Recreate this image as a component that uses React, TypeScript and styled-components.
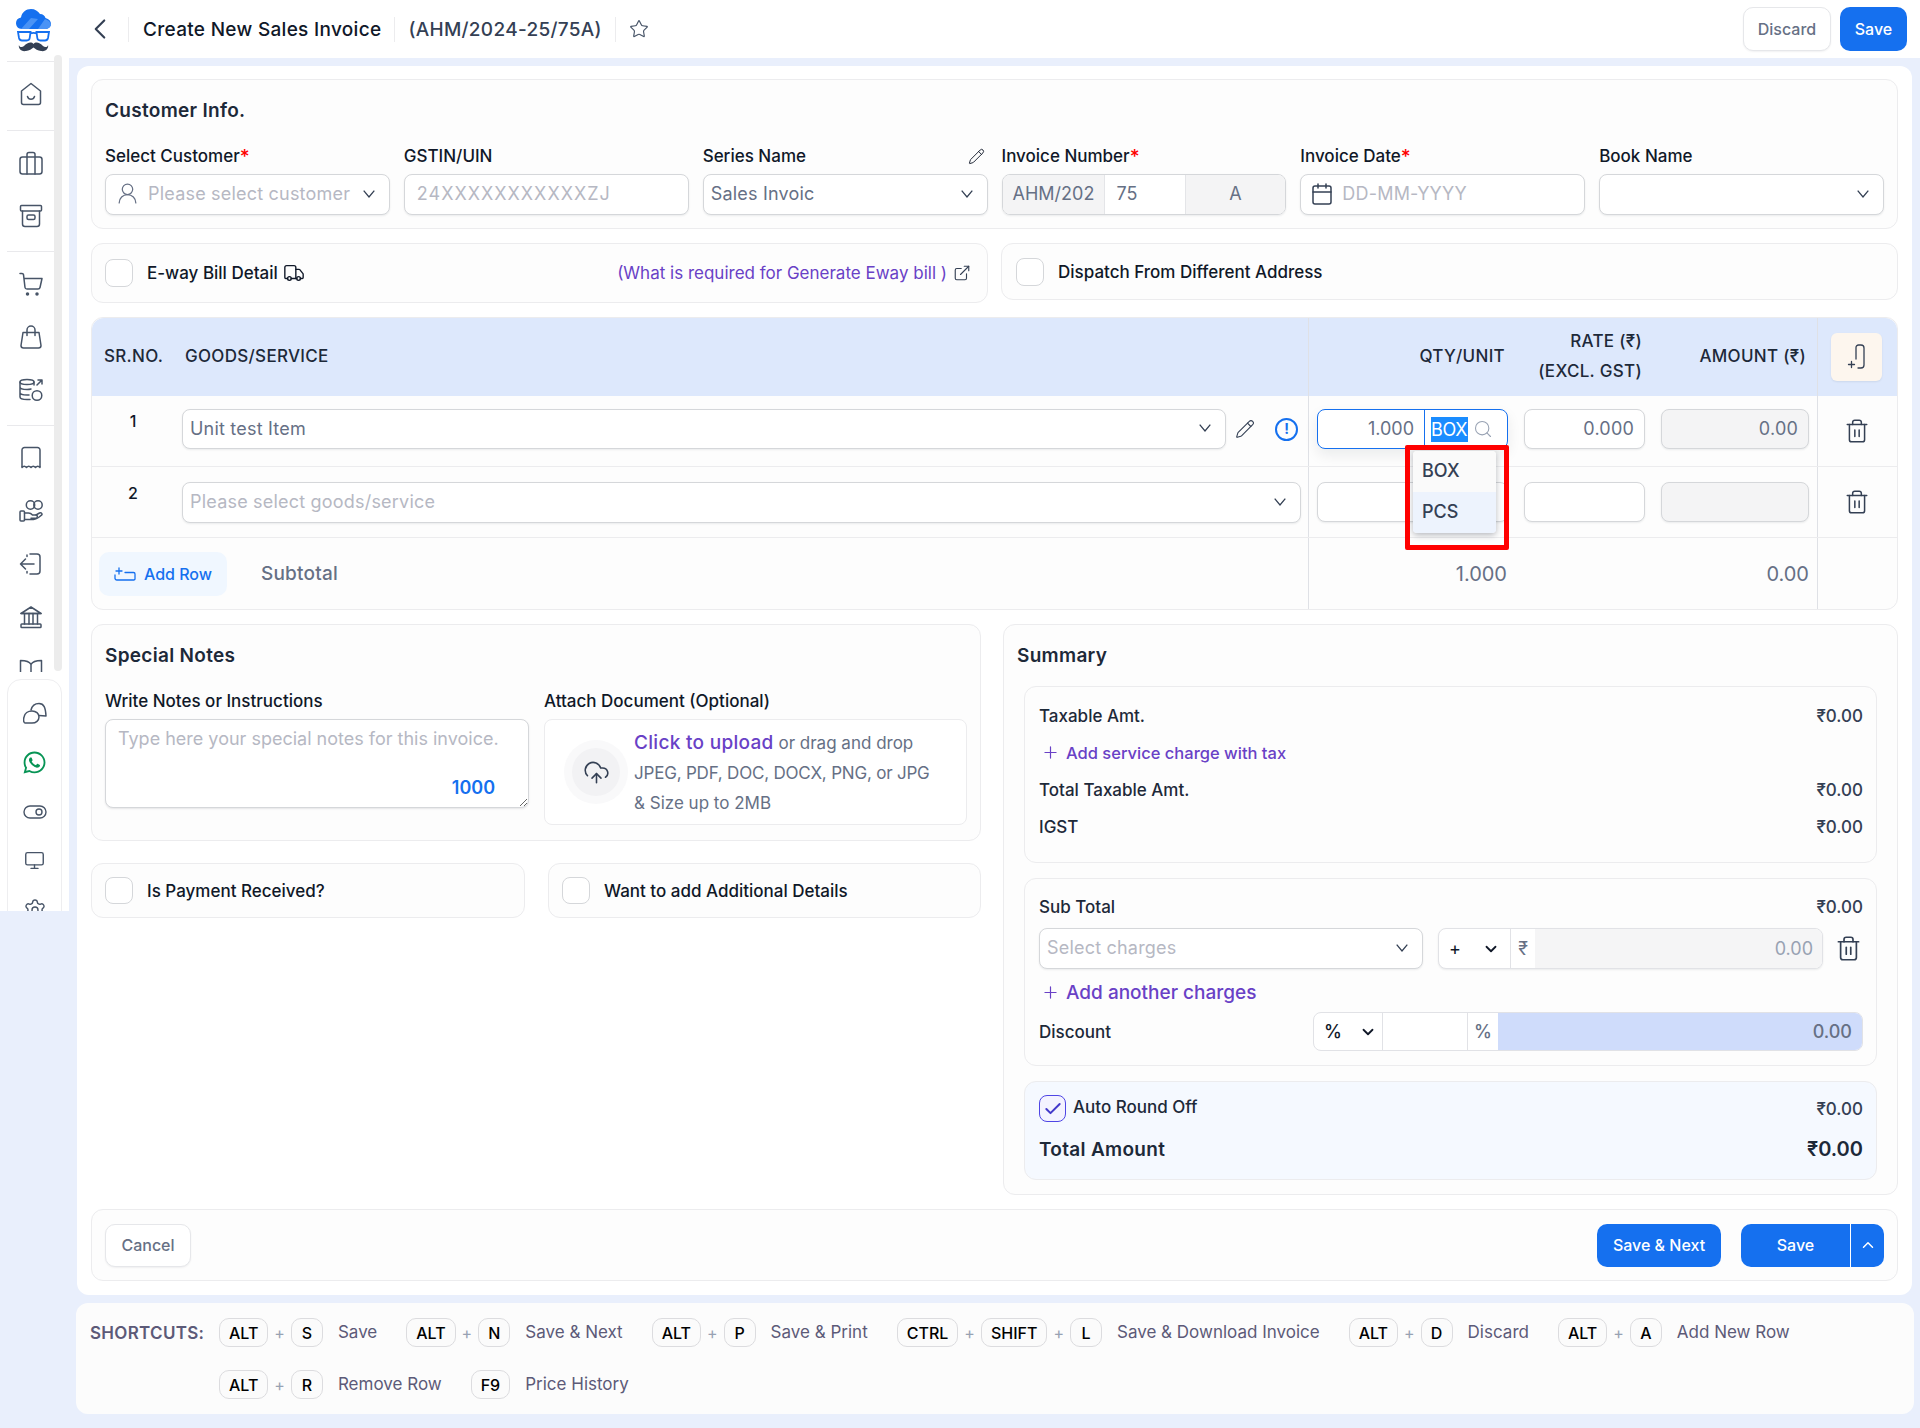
import React from 'react';
import styled, { createGlobalStyle } from 'styled-components';
import { FaWhatsapp } from 'react-icons/fa';
import {
  Calendar,
  Check,
  ChevronDown,
  ChevronLeft,
  ChevronUp,
  CloudUpload,
  ExternalLink,
  Monitor,
  Pencil,
  Plus,
  Search,
  Settings,
  Star,
  Trash2,
  Truck,
  UserRound,
} from 'lucide-react';

const GlobalStyle = createGlobalStyle`
  * { box-sizing: border-box; }
  body {
    margin: 0;
    background: #e9effc;
    font-family: Inter, "Noto Sans", sans-serif;
    color: #101828;
  }
`;

const Shell = styled.div`
  display: grid;
  grid-template-columns: 69px 1fr;
  min-height: 1428px;
`;

/* sidebar */
const Sidebar = styled.aside`
  height: 911px;
  background: #fff;
  overflow: hidden;
`;
const SideTop = styled.div`
  display: flex;
  height: 672px;
  padding-left: 7px;
  overflow: hidden;
`;
const SideNav = styled.nav`
  width: 47px;
  flex: none;
`;
const ScrollThumb = styled.div`
  width: 8px;
  height: 616px;
  margin-top: 55px;
  background: #ececec;
  border-radius: 4px;
`;
const LogoBox = styled.div`
  height: 62px;
  padding: 9px 0 0 9px;
  border-bottom: 1px solid #e9e9ec;
`;
const NavGroup = styled.div`
  padding: 5px 0 9px;
  border-bottom: 1px solid #e9e9ec;
  &:last-child { border-bottom: none; }
`;
const NavItem = styled.div<{ $green?: boolean; $h?: number }>`
  height: ${(p) => p.$h ?? 53}px;
  display: flex;
  align-items: center;
  justify-content: center;
  color: ${(p) => (p.$green ? '#079455' : '#475467')};
`;
const SideBottom = styled.div`
  margin: 7px 7px 0;
  padding-top: 9px;
  height: 240px;
  border: 1px solid #eeeef0;
  border-radius: 14px 14px 0 0;
`;

const Logo = () => (
  <svg width="35" height="43" viewBox="0 0 35 43">
    <path d="M6 20C2 20 0 17 0 14c0-3 2-5 5-5.500C6 3 10 0 15 0c4 0 7 2 9 5 3 0 5 2 5.500 4C33 10 35 12 35 15c0 3-3 5-6 5Z" fill="#1570ef" />
    <path d="M5 20 15 9l7 1-9 10ZM22 20l7-10 4 2 2 3c0 3-3 5-6 5Z" fill="#4a93f5" />
    <path d="M2 23h12.500l-.8 6c-.2 1.500-1.400 2.500-3 2.500H6c-1.500 0-2.600-1-3-2.500ZM20.500 23H33l-1 6c-.4 1.500-1.500 2.500-3 2.500h-4.700c-1.600 0-2.800-1-3-2.500ZM14.500 24.500c2-.8 4-.8 6 0" fill="none" stroke="#1570ef" strokeWidth="1.800" />
    <path d="M17.500 35c-2.500-3-6.500-1-9.500 2-2 2-5 1-5-1-1 3 2 7 7 6 3-.5 6-2 7.500-3.500C19 40 22 41.500 25 42c5 1 8-3 7-6 0 2-3 3-5 1-3-3-7-5-9.500-2Z" fill="#344054" />
  </svg>
);

const IconSvg = ({ children }: { children: React.ReactNode }) => (
  <svg width="24" height="24" viewBox="0 0 24 24" fill="none" stroke="currentColor" strokeWidth="1.500" strokeLinecap="round" strokeLinejoin="round">
    {children}
  </svg>
);

const HomeIcon = () => (
  <IconSvg>
    <path d="M12 1.500 2.500 9v11.500a2 2 0 0 0 2 2h15a2 2 0 0 0 2-2V9Z" />
    <path d="M8.500 14.500c.6 1.800 2 2.700 3.500 2.700s2.900-.9 3.500-2.700" />
  </IconSvg>
);
const CaseIcon = () => (
  <IconSvg>
    <rect x="1" y="6" width="22" height="17" rx="2.500" />
    <path d="M8 23V3.500A2 2 0 0 1 10 1.500h4a2 2 0 0 1 2 2V23" />
  </IconSvg>
);
const ArchiveIcon = () => (
  <IconSvg>
    <rect x="1.500" y="1.500" width="21" height="5.500" rx="1" />
    <path d="M3.500 7v13a2.500 2.500 0 0 0 2.500 2.500h12a2.500 2.500 0 0 0 2.500-2.500V7" />
    <rect x="8" y="11" width="8" height="4.500" rx="1.500" />
  </IconSvg>
);
const CartIcon = () => (
  <IconSvg>
    <path d="M1 1.500h2c.8 0 1.400.5 1.500 1.200L6 15.500c.1 1 1 1.500 2 1.500h11c1 0 1.800-.6 2-1.500l2-9H5" />
    <circle cx="8.500" cy="22" r="1" fill="currentColor" />
    <circle cx="18" cy="22" r="1" fill="currentColor" />
  </IconSvg>
);
const BagIcon = () => (
  <IconSvg>
    <path d="M4 7.500h16l2 13a2.500 2.500 0 0 1-2.500 2.500h-15A2.500 2.500 0 0 1 2 20.500Z" />
    <path d="M8 10.500V5a4 4 0 0 1 8 0v5.500" />
  </IconSvg>
);
const DataIcon = () => (
  <IconSvg>
    <ellipse cx="8" cy="4" rx="7" ry="2.500" />
    <path d="M1 4v15c0 1.500 3 2.500 7 2.500h3M1 9c0 1.400 3 2.500 7 2.500 1.500 0 3-.2 4-.5M1 14.500C1 16 4 17 8 17h2M15 4v3" />
    <circle cx="18" cy="17.500" r="4.800" />
    <path d="M18 7l5-5M19 2h4v4" />
  </IconSvg>
);
const ReceiptIcon = () => (
  <IconSvg>
    <path d="M3 21.500V4a2.500 2.500 0 0 1 2.500-2.500h13A2.500 2.500 0 0 1 21 4v17.500c-1.500-1.800-3-1.800-4.500 0-1.500-1.800-3-1.800-4.500 0-1.500-1.800-3-1.800-4.500 0-1.500-1.800-3-1.800-4.500 0Z" />
  </IconSvg>
);
const HandIcon = () => (
  <IconSvg>
    <rect x="1" y="12" width="4.500" height="10" rx="1" />
    <path d="M5.500 14h4c2 0 3 .8 4 2h3.500c1.800 0 1.800 3.200 0 3.200h-5" />
    <path d="M5.500 20.500h9c2 0 3-.5 5-2l3-2.300c1.200-1.200 0-3-2-2.200l-3.500 2" />
    <circle cx="11.500" cy="6" r="4.200" />
    <circle cx="19" cy="6" r="4.200" />
  </IconSvg>
);
const DoorIcon = () => (
  <IconSvg>
    <path d="M11 2h7a3 3 0 0 1 3 3v14a3 3 0 0 1-3 3h-7M8 4.500V3M8 21v-1.500" />
    <path d="M15 12H1.500M6.500 7l-5 5 5 5" />
  </IconSvg>
);
const BankIcon = () => (
  <IconSvg>
    <path d="M2 8.500 12 2l10 6.500Z" />
    <path d="M2 8.500h20" />
    <rect x="2" y="19" width="20" height="3.500" rx=".8" />
    <path d="M5.500 8.500V19M10 8.500V19M14 8.500V19M18.500 8.500V19" />
  </IconSvg>
);
const BookIcon = () => (
  <IconSvg>
    <path d="M12 6.500C10.500 3.500 7 2.500 1.500 2.500V20M12 6.500c1.500-3 5-4 10.500-4V20M12 6.500V24" />
  </IconSvg>
);
const ChatIcon = () => (
  <IconSvg>
    <path d="M8 8c1-4 4-6.500 8-6.500 5 0 6.500 4 7 12.500l-7-.5" />
    <path d="M9 9c4 0 7 2.500 7 6s-3 6-7 6H2c-.5 0-.8-.5-1-1-.5-1-.5-3 0-5 .7-3.500 4-6 8-6Z" />
  </IconSvg>
);
const ToggleIcon = () => (
  <svg width="24" height="14" viewBox="0 0 24 14" fill="none" stroke="currentColor" strokeWidth="1.400">
    <rect x="1" y="1" width="22" height="12" rx="6" />
    <circle cx="16" cy="7" r="3" />
  </svg>
);
const DoorPlusIcon = () => (
  <svg width="20" height="26" viewBox="0 0 20 26" fill="none" stroke="#344054" strokeWidth="1.300" strokeLinecap="round">
    <path d="M9 15V3.500A2.500 2.500 0 0 1 11.500 1H14a3 3 0 0 1 3 3v17a3 3 0 0 1-3 3h-3" />
    <path d="M4.500 17.500v6M1.500 20.500h6" />
  </svg>
);
const AddRowIcon = () => (
  <svg width="22" height="14" viewBox="0 0 22 14" fill="none" stroke="#1570ef" strokeWidth="1.300" strokeLinecap="round">
    <path d="M5 1v6M2 4h6M1 8v2.500A2 2 0 0 0 3 13h17a1.500 1.500 0 0 0 1-1V7a1.500 1.500 0 0 0-1.500-1.500H11" />
  </svg>
);
const ChevronBox = styled.span`
  display: flex;
  flex: none;
  margin-right: 4px;
`;
const ThinChevron = () => (
  <ChevronBox>
    <svg width="12" height="8" viewBox="0 0 12 8" fill="none" stroke="#344054" strokeWidth="1.300">
      <path d="M.7.7 6 7 11.300.7" />
    </svg>
  </ChevronBox>
);

/* main column */
const MainCol = styled.main`
  min-width: 0;
  display: flex;
  flex-direction: column;
`;
const Header = styled.header`
  height: 58px;
  background: #fff;
  display: flex;
  align-items: center;
  padding: 0 13px 0 24px;
`;
const BackBtn = styled.div`
  width: 36px;
  height: 25px;
  display: flex;
  align-items: center;
  color: #344054;
  border-right: 1px solid #ececee;
  margin-right: 14px;
  svg { margin-left: -10px; flex: none; }
`;
const HeaderTitle = styled.div<{ $tail?: boolean }>`
  font-size: 19px;
  font-weight: 500;
  letter-spacing: 0.3px;
  color: ${(p) => (p.$tail ? '#344054' : '#101828')};
  height: 25px;
  line-height: 25px;
  padding-right: 13px;
  margin-right: 13px;
  border-right: 1px solid #ececee;
`;
const StarBtn = styled.div`
  color: #475467;
  display: flex;
`;
const HeaderActions = styled.div`
  margin-left: auto;
  display: flex;
  gap: 9px;
`;
const BaseBtn = styled.button<{ $w: number; $h?: number }>`
  width: ${(p) => p.$w}px;
  height: ${(p) => p.$h ?? 44}px;
  border-radius: 10px;
  font-family: inherit;
  font-size: 16px;
  font-weight: 500;
  border: none;
`;
const GhostBtn = styled(BaseBtn)`
  background: #fff;
  color: #667085;
  border: 1px solid #e6e7ea;
  box-shadow: 0 1px 2px rgba(16, 24, 40, 0.06);
`;
const PrimaryBtn = styled(BaseBtn)`
  background: #1570ef;
  color: #fff;
`;

const Content = styled.div`
  padding: 8px 8px 0;
`;
const MainCard = styled.div`
  background: #fff;
  border-radius: 12px;
  padding: 13px 14px 14px;
  display: flex;
  flex-direction: column;
  gap: 14px;
`;
const Card = styled.section`
  background: #fdfdfd;
  border: 1px solid #ececee;
  border-radius: 12px;
`;
const SectionTitle = styled.h2`
  margin: 0;
  font-size: 19px;
  letter-spacing: 0.3px;
  line-height: 24px;
  font-weight: 600;
  color: #1d2939;
`;
const CustomerCard = styled(Card)`
  padding: 19px 13px 13px;
`;
const FieldGrid = styled.div`
  display: grid;
  grid-template-columns: repeat(6, 1fr);
  gap: 14px;
  margin-top: 21px;
`;
const Label = styled.label`
  display: flex;
  justify-content: space-between;
  align-items: center;
  height: 24px;
  margin-bottom: 6px;
  font-size: 17px;
  font-weight: 450;
  color: #101828;
  white-space: nowrap;
  b { color: #f00; font-weight: 500; margin-right: auto; font-size: 19px; }
  svg { margin-right: 3px; }
`;
const Input = styled.div<{ $h?: number; $grey?: boolean; $pl?: number; $grow?: boolean }>`
  height: ${(p) => p.$h ?? 41}px;
  display: flex;
  align-items: center;
  gap: 8px;
  padding: 0 10px 2px ${(p) => p.$pl ?? 12}px;
  flex: ${(p) => (p.$grow ? 1 : 'none')};
  background: ${(p) => (p.$grey ? '#f4f4f5' : '#fff')};
  border: 1px solid #d5d7da;
  border-radius: 8px;
  box-shadow: 0 1px 2px rgba(16, 24, 40, 0.08);
  font-size: 18px;
  letter-spacing: 0.2px;
  color: #667085;
  overflow: hidden;
  white-space: nowrap;
`;
const Placeholder = styled.span<{ $ls?: number }>`
  color: #b6b8c3;
  flex: 1;
  letter-spacing: ${(p) => p.$ls ?? 0.2}px;
`;
const Value = styled.span`
  color: #667085;
  flex: 1;
`;
const NumValue = styled.span`
  flex: 1;
  text-align: right;
  color: #667085;
`;
const SegGroup = styled.div`
  height: 41px;
  display: grid;
  grid-template-columns: 102px 81px 1fr;
  border: 1px solid #d5d7da;
  border-radius: 8px;
  box-shadow: 0 1px 2px rgba(16, 24, 40, 0.08);
  overflow: hidden;
  font-size: 18px;
  color: #667085;
`;
const Seg = styled.div<{ $grey?: boolean; $center?: boolean }>`
  display: flex;
  align-items: center;
  justify-content: ${(p) => (p.$center ? 'center' : 'flex-start')};
  padding: 0 ${(p) => (p.$grey && !p.$center ? '0 2px 10px' : '12px 2px')};
  background: ${(p) => (p.$grey ? '#f4f4f5' : '#fff')};
  border-right: 1px solid #e4e5e8;
  white-space: nowrap;
  &:last-child { border-right: none; }
`;

const TwoCol = styled.div`
  display: grid;
  grid-template-columns: 1fr 1fr;
  gap: 13px;
  align-items: start;
`;
const CheckCard = styled(Card)<{ $h: number; $pl?: number }>`
  height: ${(p) => p.$h}px;
  display: flex;
  align-items: center;
  padding: 0 13px 0 ${(p) => p.$pl ?? 13}px;
  gap: 14px;
  font-size: 17px;
  font-weight: 450;
  color: #101828;
`;
const Box = styled.span<{ $on?: boolean; $w?: number; $h?: number }>`
  width: ${(p) => p.$w ?? 28}px;
  height: ${(p) => p.$h ?? 28}px;
  flex: none;
  display: flex;
  align-items: center;
  justify-content: center;
  background: ${(p) => (p.$on ? '#f4f3ff' : '#fff')};
  border: 1px solid ${(p) => (p.$on ? '#4f46e5' : '#d5d7da')};
  border-radius: 8px;
  color: #4338ca;
`;
const InlineIcon = styled.span`
  display: inline-flex;
  margin-left: -9px;
`;
const HelpLink = styled.a`
  margin: 0 3px 0 auto;
  display: flex;
  align-items: center;
  gap: 6px;
  font-size: 17px;
  font-weight: 400;
  color: #6941c6;
  svg { color: #344054; }
`;

/* goods table */
const TableCard = styled(Card)`
  position: relative;
`;
const TableRow = styled.div<{ $head?: boolean; $h: number }>`
  display: grid;
  grid-template-columns: 1216px 509px 1fr;
  height: ${(p) => p.$h}px;
  background: ${(p) => (p.$head ? '#dde8fc' : 'transparent')};
  border-radius: ${(p) => (p.$head ? '12px 12px 0 0' : '0')};
  border-bottom: ${(p) => (p.$head ? 'none' : '1px solid #ececee')};
  &:last-child { border-bottom: none; }
`;
const GoodsCell = styled.div`
  display: grid;
  grid-template-columns: 90px 1fr;
`;
const SrCell = styled.div<{ $top?: number }>`
  padding: ${(p) => p.$top ?? 13}px 8px 0 0;
  text-align: center;
  font-size: 16px;
  line-height: 24px;
  font-weight: 500;
`;
const HeadText = styled.div<{ $pad?: number }>`
  display: flex;
  align-items: center;
  padding: 0 0 2px ${(p) => p.$pad ?? 0}px;
  font-size: 17px;
  letter-spacing: 0.3px;
  font-weight: 500;
  color: #1d2939;
  white-space: nowrap;
`;
const GoodsInputWrap = styled.div<{ $top?: number }>`
  padding: ${(p) => p.$top ?? 13}px 7px 0 0;
  display: flex;
  align-items: flex-start;
  gap: 0;
`;
const GoodsTools = styled.div`
  flex: none;
  width: 75px;
  height: 40px;
  display: flex;
  align-items: center;
  gap: 20px;
  padding-left: 9px;
  color: #344054;
`;
const InfoMark = styled.span`
  width: 23px;
  height: 23px;
  flex: none;
  display: flex;
  align-items: center;
  justify-content: center;
  border: 2px solid #1570ef;
  border-radius: 50%;
  color: #1570ef;
  font-size: 14px;
  font-weight: 700;
  line-height: 1;
`;
const NumbersCell = styled.div<{ $top?: number }>`
  display: grid;
  grid-template-columns: 191px 121px 148px;
  column-gap: 16px;
  padding: ${(p) => p.$top ?? 13}px 8px 0;
  border-left: 1px solid #dfe1e6;
  align-items: start;
  position: relative;
`;
const HeadNumbers = styled(NumbersCell)`
  padding-top: 0;
  padding-bottom: 2px;
  height: 100%;
  align-items: center;
`;
const HeadNum = styled.div`
  text-align: right;
  padding-right: 3px;
  font-size: 17px;
  letter-spacing: 0.3px;
  line-height: 30px;
  font-weight: 500;
  color: #1d2939;
  white-space: nowrap;
`;
const ActionCell = styled.div`
  border-left: 1px solid #dfe1e6;
  display: flex;
  align-items: center;
  justify-content: center;
  padding-right: 2px;
  color: #344054;
`;
const DoorBtn = styled.div`
  width: 51px;
  height: 48px;
  display: flex;
  align-items: center;
  justify-content: center;
  background: #fdf6ee;
  border-radius: 6px;
  box-shadow: 0 1px 2px rgba(16, 24, 40, 0.08);
`;
const QtyGroup = styled.div<{ $active?: boolean }>`
  position: relative;
  height: 40px;
  display: grid;
  grid-template-columns: 106px 1fr;
  background: #fff;
  border: 1px solid ${(p) => (p.$active ? '#1570ef' : '#d5d7da')};
  border-radius: 8px;
  box-shadow: ${(p) => (p.$active ? '0 6px 14px rgba(16, 24, 40, 0.08)' : '0 1px 2px rgba(16, 24, 40, 0.08)')};
  font-size: 18px;
  color: #667085;
`;
const QtyValue = styled.div`
  display: flex;
  align-items: center;
  justify-content: flex-end;
  padding: 0 10px 2px 0;
`;
const UnitValue = styled.div`
  display: flex;
  align-items: center;
  gap: 5px;
  padding-left: 6px;
  border-left: 1px solid #1570ef;
  color: #98a2b3;
`;
const Selected = styled.span`
  background: #1a8cff;
  color: #fff;
  line-height: 25px;
  height: 25px;
  width: 37px;
  letter-spacing: -0.4px;
  overflow: hidden;
`;
const UnitMenu = styled.div`
  position: absolute;
  left: 95px;
  top: 41px;
  width: 83px;
  z-index: 3;
  background: #fafafa;
  border-radius: 4px;
  box-shadow: 0 2px 6px rgba(16, 24, 40, 0.3);
  overflow: hidden;
`;
const UnitOption = styled.div<{ $hover?: boolean }>`
  height: 41px;
  display: flex;
  align-items: center;
  padding: 0 0 2px 9px;
  background: ${(p) => (p.$hover ? '#edf3fd' : '#fafafa')};
  font-size: 18px;
  font-weight: 500;
  color: #344054;
`;
const RedMark = styled.div`
  position: absolute;
  left: 87px;
  top: 35px;
  width: 104px;
  height: 105px;
  z-index: 4;
  border: 5px solid #f00;
  border-radius: 2px;
  pointer-events: none;
`;
const FootCell = styled.div`
  display: flex;
  align-items: center;
  padding-left: 7px;
  gap: 34px;
`;
const AddRowBtn = styled.div`
  width: 128px;
  height: 44px;
  display: flex;
  align-items: center;
  justify-content: center;
  gap: 8px;
  background: #f0f7ff;
  border-radius: 10px;
  font-size: 16px;
  font-weight: 500;
  color: #1570ef;
`;
const SubLabel = styled.span`
  font-size: 19px;
  letter-spacing: 0.2px;
  font-weight: 500;
  color: #667085;
`;
const FootTotals = styled.div`
  border-left: 1px solid #dfe1e6;
  display: grid;
  grid-template-columns: 198px 1fr;
  align-items: center;
  padding-right: 8px;
  font-size: 20px;
  color: #667085;
  text-align: right;
`;

/* notes and summary */
const BottomGrid = styled.div`
  display: grid;
  grid-template-columns: 890px 895px;
  gap: 22px;
  align-items: start;
`;
const LeftStack = styled.div`
  display: flex;
  flex-direction: column;
  gap: 22px;
`;
const NotesCard = styled(Card)`
  padding: 19px 13px 15px;
`;
const NotesGrid = styled.div`
  display: grid;
  grid-template-columns: 424px 423px;
  gap: 15px;
  margin-top: 21px;
  align-items: start;
`;
const NoteWrap = styled.div`
  position: relative;
`;
const NoteArea = styled.textarea`
  display: block;
  width: 100%;
  height: 89px;
  padding: 7px 12px;
  border: 1px solid #d5d7da;
  border-radius: 8px;
  box-shadow: 0 1px 2px rgba(16, 24, 40, 0.1);
  font-family: inherit;
  font-size: 18px;
  line-height: 24px;
  &::placeholder { color: #b6b8c3; }
`;
const Counter = styled.span`
  position: absolute;
  right: 34px;
  bottom: 10px;
  font-size: 18px;
  font-weight: 600;
  color: #1570ef;
`;
const DropZone = styled.div`
  height: 106px;
  display: flex;
  align-items: center;
  gap: 6px;
  padding-left: 19px;
  background: #fff;
  border: 1px solid #ececee;
  border-radius: 8px;
`;
const UploadHalo = styled.div`
  width: 64px;
  height: 64px;
  flex: none;
  display: flex;
  align-items: center;
  justify-content: center;
  background: #f9f9fa;
  border-radius: 50%;
  color: #344054;
`;
const UploadInner = styled.div`
  width: 48px;
  height: 48px;
  display: flex;
  align-items: center;
  justify-content: center;
  background: #f2f2f4;
  border-radius: 50%;
`;
const UploadText = styled.div`
  padding-top: 2px;
  font-size: 17px;
  line-height: 30px;
  color: #667085;
  white-space: nowrap;
  a {
    font-size: 19px;
    letter-spacing: 0.3px;
    font-weight: 500;
    color: #6941c6;
  }
`;
const FormatHint = styled.span`
  letter-spacing: -0.2px;
`;
const PayRow = styled.div`
  display: grid;
  grid-template-columns: 434px 433px;
  gap: 23px;
`;
const SummaryCard = styled(Card)`
  padding: 19px 20px 14px;
`;
const SummaryTitle = styled(SectionTitle)`
  margin: 0 0 18px -7px;
`;
const SumBox = styled.div<{ $tint?: boolean; $pad: string }>`
  padding: ${(p) => p.$pad};
  background: ${(p) => (p.$tint ? '#f5f9ff' : '#fdfdfd')};
  border: 1px solid #ececee;
  border-radius: 12px;
  margin-bottom: 15px;
  &:last-child { margin-bottom: 0; }
`;
const SumRow = styled.div<{ $h?: number }>`
  display: flex;
  align-items: center;
  justify-content: space-between;
  height: ${(p) => p.$h ?? 37}px;
  font-size: 17px;
  font-weight: 450;
  color: #1d2939;
`;
const Amount = styled.span`
  font-size: 17px;
  font-weight: 450;
  color: #344054;
`;
const AddLink = styled.div<{ $big?: boolean }>`
  display: flex;
  align-items: center;
  gap: 6px;
  height: ${(p) => (p.$big ? 24 : 37)}px;
  margin-top: ${(p) => (p.$big ? 11 : 0)}px;
  padding-left: 2px;
  font-size: ${(p) => (p.$big ? 19 : 16.5)}px;
  font-weight: 500;
  color: #6941c6;
`;
const ChargeRow = styled.div`
  display: grid;
  grid-template-columns: 384px 385px 1fr;
  column-gap: 15px;
  margin-top: 10px;
  align-items: center;
`;
const ChargeGroup = styled.div`
  height: 41px;
  display: grid;
  grid-template-columns: 72px 24px 1fr;
  background: #fff;
  border: 1px solid #e1e2e6;
  border-radius: 8px;
  box-shadow: 0 1px 2px rgba(16, 24, 40, 0.08);
  overflow: hidden;
  font-size: 18px;
`;
const SignSelect = styled.div<{ $pr?: number }>`
  display: flex;
  align-items: center;
  justify-content: space-between;
  padding: 0 ${(p) => p.$pr ?? 10}px 0 10px;
  border-right: 1px solid #e1e2e6;
  color: #101828;
`;
const Rupee = styled.div`
  display: flex;
  align-items: center;
  justify-content: center;
  color: #667085;
`;
const ChargeValue = styled.div<{ $blue?: boolean }>`
  display: flex;
  align-items: center;
  justify-content: flex-end;
  padding-right: ${(p) => (p.$blue ? 10 : 9)}px;
  background: ${(p) => (p.$blue ? '#cfdcfb' : '#f5f5f6')};
  color: ${(p) => (p.$blue ? '#667085' : '#98a2b3')};
`;
const TrashBtn = styled.div`
  margin-left: -3px;
  display: flex;
  color: #344054;
`;
const DiscountRow = styled.div`
  display: flex;
  align-items: center;
  justify-content: space-between;
  margin-top: 8px;
  font-size: 17px;
  font-weight: 450;
  color: #1d2939;
`;
const DiscountGroup = styled.div`
  width: 550px;
  height: 39px;
  display: grid;
  grid-template-columns: 69px 84px 31px 1fr;
  background: #fff;
  border: 1px solid #e1e2e6;
  border-radius: 8px;
  overflow: hidden;
  font-size: 18px;
`;
const PctCell = styled.div`
  display: flex;
  align-items: center;
  justify-content: center;
  color: #667085;
  border-left: 1px solid #e1e2e6;
`;
const EmptyCell = styled.div``;
const RoundLabel = styled.div`
  display: flex;
  align-items: flex-start;
  gap: 7px;
  height: 28px;
  span { line-height: 24px; }
`;
const TotalRow = styled(SumRow)`
  margin-top: 12px;
  font-size: 19px;
  letter-spacing: 0.3px;
  font-weight: 600;
  color: #1d2939;
`;
const TotalAmount = styled.span`
  font-size: 20px;
  letter-spacing: 0;
  font-weight: 600;
`;

/* footer */
const FooterCard = styled(Card)`
  height: 72px;
  display: flex;
  align-items: center;
  justify-content: space-between;
  padding: 0 13px;
`;
const ActionRow = styled.div`
  display: flex;
  gap: 20px;
`;
const SplitBtn = styled.div`
  display: flex;
  height: 43px;
  background: #1570ef;
  border-radius: 10px;
  color: #fff;
  overflow: hidden;
`;
const SplitMain = styled.div`
  width: 110px;
  display: flex;
  align-items: center;
  justify-content: center;
  font-size: 16px;
  font-weight: 500;
  border-right: 1px solid #fff;
`;
const SplitCaret = styled.div`
  width: 33px;
  display: flex;
  align-items: center;
  justify-content: center;
`;

/* shortcuts */
const ShortcutCard = styled.div`
  margin: 8px -2px 14px -1px;
  height: 111px;
  padding: 15px 14px;
  display: flex;
  background: #fcfcfc;
  border-radius: 12px;
`;
const ShortcutTitle = styled.div`
  width: 129px;
  flex: none;
  height: 29px;
  line-height: 31px;
  font-size: 17px;
  letter-spacing: 0.3px;
  font-weight: 600;
  color: #5c5a78;
`;
const ShortcutLines = styled.div`
  display: flex;
  flex-direction: column;
  gap: 23px;
`;
const ShortcutLine = styled.div`
  display: flex;
  gap: 29px;
`;
const Combo = styled.div`
  display: flex;
  align-items: center;
  gap: 6px;
  white-space: nowrap;
`;
const Key = styled.kbd`
  height: 29px;
  min-width: 32px;
  padding: 0 9px;
  display: flex;
  align-items: center;
  justify-content: center;
  background: #fbfbfb;
  border: 1px solid #dcdcdf;
  border-radius: 10px;
  font-family: inherit;
  font-size: 16px;
  font-weight: 450;
  color: #000;
`;
const Joiner = styled.span`
  font-size: 16px;
  color: #98a2b3;
`;
const KeyDesc = styled.span`
  margin: -2px 0 0 9px;
  font-size: 17px;
  color: #5c5a78;
`;

const ShortcutItem = ({ keys, label }: { keys: string[]; label: string }) => (
  <Combo>
    {keys.map((k, i) => (
      <React.Fragment key={k}>
        {i > 0 && <Joiner>+</Joiner>}
        <Key>{k}</Key>
      </React.Fragment>
    ))}
    <KeyDesc>{label}</KeyDesc>
  </Combo>
);

const firstLine = [
  { keys: ['ALT', 'S'], label: 'Save' },
  { keys: ['ALT', 'N'], label: 'Save & Next' },
  { keys: ['ALT', 'P'], label: 'Save & Print' },
  { keys: ['CTRL', 'SHIFT', 'L'], label: 'Save & Download Invoice' },
  { keys: ['ALT', 'D'], label: 'Discard' },
  { keys: ['ALT', 'A'], label: 'Add New Row' },
];
const secondLine = [
  { keys: ['ALT', 'R'], label: 'Remove Row' },
  { keys: ['F9'], label: 'Price History' },
];

const App = () => {
  return (
    <Shell>
      <GlobalStyle />
      <Sidebar>
        <SideTop>
          <SideNav>
            <LogoBox>
              <Logo />
            </LogoBox>
            <NavGroup>
              <NavItem $h={54}><HomeIcon /></NavItem>
            </NavGroup>
            <NavGroup>
              <NavItem><CaseIcon /></NavItem>
              <NavItem><ArchiveIcon /></NavItem>
            </NavGroup>
            <NavGroup>
              <NavItem><CartIcon /></NavItem>
              <NavItem><BagIcon /></NavItem>
              <NavItem><DataIcon /></NavItem>
            </NavGroup>
            <NavGroup>
              <NavItem><ReceiptIcon /></NavItem>
              <NavItem><HandIcon /></NavItem>
              <NavItem><DoorIcon /></NavItem>
              <NavItem><BankIcon /></NavItem>
              <NavItem><BookIcon /></NavItem>
            </NavGroup>
          </SideNav>
          <ScrollThumb />
        </SideTop>
        <SideBottom>
          <NavItem $h={49}><ChatIcon /></NavItem>
          <NavItem $h={49} $green><FaWhatsapp size={25} /></NavItem>
          <NavItem $h={49}><ToggleIcon /></NavItem>
          <NavItem $h={49}><Monitor size={21} strokeWidth={1.6} /></NavItem>
          <NavItem $h={49}><Settings size={24} strokeWidth={1.4} /></NavItem>
        </SideBottom>
      </Sidebar>

      <MainCol>
        <Header>
          <BackBtn><ChevronLeft size={34} strokeWidth={1.5} /></BackBtn>
          <HeaderTitle>Create New Sales Invoice</HeaderTitle>
          <HeaderTitle $tail>(AHM/2024-25/75A)</HeaderTitle>
          <StarBtn><Star size={20} strokeWidth={1.4} /></StarBtn>
          <HeaderActions>
            <GhostBtn $w={88}>Discard</GhostBtn>
            <PrimaryBtn $w={67}>Save</PrimaryBtn>
          </HeaderActions>
        </Header>

        <Content>
          <MainCard>
            <CustomerCard>
              <SectionTitle>Customer Info.</SectionTitle>
              <FieldGrid>
                <div>
                  <Label>Select Customer<b>*</b></Label>
                  <Input $pl={9}>
                    <UserRound size={25} strokeWidth={1.2} color="#667085" />
                    <Placeholder>Please select customer</Placeholder>
                    <ThinChevron />
                  </Input>
                </div>
                <div>
                  <Label>GSTIN/UIN</Label>
                  <Input><Placeholder $ls={1}>24XXXXXXXXXXXZJ</Placeholder></Input>
                </div>
                <div>
                  <Label>Series Name<Pencil size={17} strokeWidth={1.3} /></Label>
                  <Input $pl={7}>
                    <Value>Sales Invoic</Value>
                    <ThinChevron />
                  </Input>
                </div>
                <div>
                  <Label>Invoice Number<b>*</b></Label>
                  <SegGroup>
                    <Seg $grey>AHM/202</Seg>
                    <Seg>75</Seg>
                    <Seg $grey $center>A</Seg>
                  </SegGroup>
                </div>
                <div>
                  <Label>Invoice Date<b>*</b></Label>
                  <Input $pl={9}>
                    <Calendar size={24} strokeWidth={1.5} color="#344054" />
                    <Placeholder>DD-MM-YYYY</Placeholder>
                  </Input>
                </div>
                <div>
                  <Label>Book Name</Label>
                  <Input>
                    <Placeholder />
                    <ThinChevron />
                  </Input>
                </div>
              </FieldGrid>
            </CustomerCard>

            <TwoCol>
              <CheckCard $h={60}>
                <Box />
                E-way Bill Detail
                <InlineIcon><Truck size={22} strokeWidth={1.5} /></InlineIcon>
                <HelpLink>
                  (What is required for Generate Eway bill )
                  <ExternalLink size={18} strokeWidth={1.5} />
                </HelpLink>
              </CheckCard>
              <CheckCard $h={57} $pl={14}>
                <Box />
                Dispatch From Different Address
              </CheckCard>
            </TwoCol>

            <TableCard>
              <TableRow $head $h={78}>
                <GoodsCell>
                  <HeadText $pad={12}>SR.NO.</HeadText>
                  <HeadText $pad={3}>GOODS/SERVICE</HeadText>
                </GoodsCell>
                <HeadNumbers>
                  <HeadNum>QTY/UNIT</HeadNum>
                  <HeadNum>RATE (₹)<br />(EXCL. GST)</HeadNum>
                  <HeadNum>AMOUNT (₹)</HeadNum>
                </HeadNumbers>
                <ActionCell><DoorBtn><DoorPlusIcon /></DoorBtn></ActionCell>
              </TableRow>

              <TableRow $h={71}>
                <GoodsCell>
                  <SrCell>1</SrCell>
                  <GoodsInputWrap>
                    <Input $h={40} $grow $pl={7}>
                      <Value>Unit test Item</Value>
                      <ThinChevron />
                    </Input>
                    <GoodsTools>
                      <Pencil size={20} strokeWidth={1.3} />
                      <InfoMark>!</InfoMark>
                    </GoodsTools>
                  </GoodsInputWrap>
                </GoodsCell>
                <NumbersCell>
                  <QtyGroup $active>
                    <QtyValue>1.000</QtyValue>
                    <UnitValue>
                      <Selected>BOX</Selected>
                      <Search size={20} strokeWidth={1.3} />
                    </UnitValue>
                    <UnitMenu>
                      <UnitOption>BOX</UnitOption>
                      <UnitOption $hover>PCS</UnitOption>
                    </UnitMenu>
                    <RedMark />
                  </QtyGroup>
                  <Input $h={40}><NumValue>0.000</NumValue></Input>
                  <Input $h={40} $grey><NumValue>0.00</NumValue></Input>
                </NumbersCell>
                <ActionCell><Trash2 size={26} strokeWidth={1.4} /></ActionCell>
              </TableRow>

              <TableRow $h={71}>
                <GoodsCell>
                  <SrCell $top={14}>2</SrCell>
                  <GoodsInputWrap $top={15}>
                    <Input $h={41} $grow $pl={7}>
                      <Placeholder>Please select goods/service</Placeholder>
                      <ThinChevron />
                    </Input>
                  </GoodsInputWrap>
                </GoodsCell>
                <NumbersCell $top={15}>
                  <QtyGroup />
                  <Input $h={40} />
                  <Input $h={40} $grey />
                </NumbersCell>
                <ActionCell><Trash2 size={26} strokeWidth={1.4} /></ActionCell>
              </TableRow>

              <TableRow $h={71}>
                <FootCell>
                  <AddRowBtn><AddRowIcon />Add Row</AddRowBtn>
                  <SubLabel>Subtotal</SubLabel>
                </FootCell>
                <FootTotals>
                  <span>1.000</span>
                  <span>0.00</span>
                </FootTotals>
                <ActionCell />
              </TableRow>
            </TableCard>

            <BottomGrid>
              <LeftStack>
                <NotesCard>
                  <SectionTitle>Special Notes</SectionTitle>
                  <NotesGrid>
                    <div>
                      <Label>Write Notes or Instructions</Label>
                      <NoteWrap>
                        <NoteArea placeholder="Type here your special notes for this invoice." />
                        <Counter>1000</Counter>
                      </NoteWrap>
                    </div>
                    <div>
                      <Label>Attach Document (Optional)</Label>
                      <DropZone>
                        <UploadHalo>
                          <UploadInner><CloudUpload size={27} strokeWidth={1.4} /></UploadInner>
                        </UploadHalo>
                        <UploadText>
                          <a>Click to upload</a> or drag and drop<br />
                          <FormatHint>JPEG, PDF, DOC, DOCX, PNG, or JPG</FormatHint><br />
                          &amp; Size up to 2MB
                        </UploadText>
                      </DropZone>
                    </div>
                  </NotesGrid>
                </NotesCard>
                <PayRow>
                  <CheckCard $h={55}>
                    <Box $h={27} />
                    Is Payment Received?
                  </CheckCard>
                  <CheckCard $h={55}>
                    <Box $h={27} />
                    Want to add Additional Details
                  </CheckCard>
                </PayRow>
              </LeftStack>

              <SummaryCard>
                <SummaryTitle>Summary</SummaryTitle>
                <SumBox $pad="10px 13px 17px 14px">
                  <SumRow>Taxable Amt.<Amount>₹0.00</Amount></SumRow>
                  <AddLink><Plus size={19} strokeWidth={1.5} />Add service charge with tax</AddLink>
                  <SumRow>Total Taxable Amt.<Amount>₹0.00</Amount></SumRow>
                  <SumRow>IGST<Amount>₹0.00</Amount></SumRow>
                </SumBox>
                <SumBox $pad="17px 13px 14px 14px">
                  <SumRow $h={22}>Sub Total<Amount>₹0.00</Amount></SumRow>
                  <ChargeRow>
                    <Input $pl={7}>
                      <Placeholder>Select charges</Placeholder>
                      <ThinChevron />
                    </Input>
                    <ChargeGroup>
                      <SignSelect>+<ChevronDown size={18} strokeWidth={2.4} /></SignSelect>
                      <Rupee>₹</Rupee>
                      <ChargeValue>0.00</ChargeValue>
                    </ChargeGroup>
                    <TrashBtn><Trash2 size={27} strokeWidth={1.5} /></TrashBtn>
                  </ChargeRow>
                  <AddLink $big><Plus size={19} strokeWidth={1.5} />Add another charges</AddLink>
                  <DiscountRow>
                    Discount
                    <DiscountGroup>
                      <SignSelect $pr={5}>%<ChevronDown size={18} strokeWidth={2.4} /></SignSelect>
                      <EmptyCell />
                      <PctCell>%</PctCell>
                      <ChargeValue $blue>0.00</ChargeValue>
                    </DiscountGroup>
                  </DiscountRow>
                </SumBox>
                <SumBox $tint $pad="13px 13px 16px 14px">
                  <SumRow $h={28}>
                    <RoundLabel>
                      <Box $on $h={27} $w={27}><Check size={20} strokeWidth={2.4} /></Box>
                      <span>Auto Round Off</span>
                    </RoundLabel>
                    <Amount>₹0.00</Amount>
                  </SumRow>
                  <TotalRow $h={28}>Total Amount<TotalAmount>₹0.00</TotalAmount></TotalRow>
                </SumBox>
              </SummaryCard>
            </BottomGrid>

            <FooterCard>
              <GhostBtn $w={86} $h={43}>Cancel</GhostBtn>
              <ActionRow>
                <PrimaryBtn $w={124} $h={43}>Save &amp; Next</PrimaryBtn>
                <SplitBtn>
                  <SplitMain>Save</SplitMain>
                  <SplitCaret><ChevronUp size={18} strokeWidth={2} /></SplitCaret>
                </SplitBtn>
              </ActionRow>
            </FooterCard>
          </MainCard>

          <ShortcutCard>
            <ShortcutTitle>SHORTCUTS:</ShortcutTitle>
            <ShortcutLines>
              <ShortcutLine>
                {firstLine.map((s) => <ShortcutItem key={s.label} keys={s.keys} label={s.label} />)}
              </ShortcutLine>
              <ShortcutLine>
                {secondLine.map((s) => <ShortcutItem key={s.label} keys={s.keys} label={s.label} />)}
              </ShortcutLine>
            </ShortcutLines>
          </ShortcutCard>
        </Content>
      </MainCol>
    </Shell>
  );
};

export default App;
